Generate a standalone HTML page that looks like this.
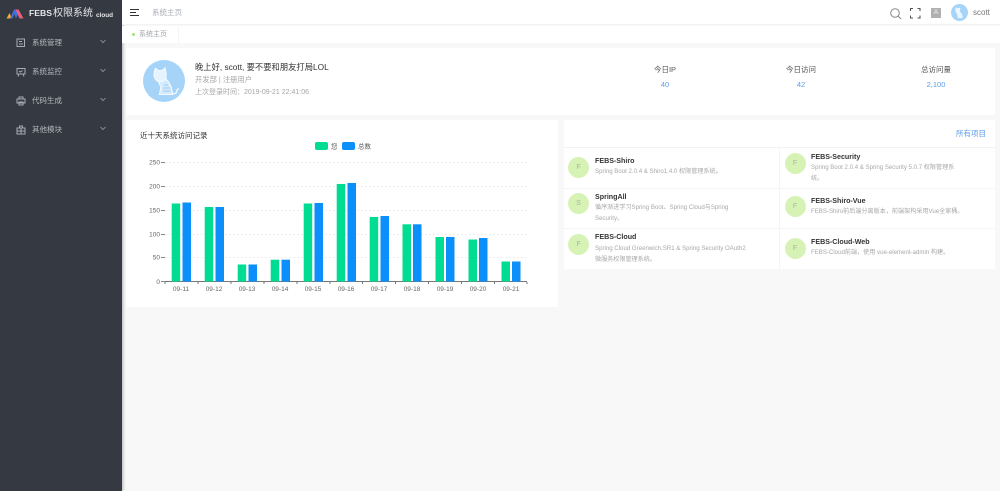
<!DOCTYPE html>
<html><head><meta charset="utf-8"><style>
*{margin:0;padding:0;box-sizing:border-box}
html,body{width:1000px;height:491px;overflow:hidden;background:#f8f8f8;font-family:"Liberation Sans","Noto Sans CJK SC",sans-serif}
#w{position:absolute;left:0;top:0;width:1000px;height:491px;filter:blur(.25px)}
.a{position:absolute;white-space:nowrap}
.card{position:absolute;background:#fff}
.nav{position:absolute;left:32px;font-size:7.5px;color:#b4b7bc;line-height:10px}
.av{position:absolute;width:21px;height:21px;border-radius:50%;background:#d6f3b5;color:#a8b596;font-size:7px;line-height:21px;text-align:center}
.t{position:absolute;font-size:7.1px;font-weight:bold;color:#333;line-height:10px;white-space:nowrap}
.d{position:absolute;font-size:6.1px;color:#a8a8a8;line-height:10.8px;width:155px}
.s{position:absolute;font-size:7.5px;color:#555;text-align:center;width:80px;line-height:10px}
.n{position:absolute;font-size:7.5px;color:#5b9be8;text-align:center;width:80px;line-height:10px}
</style></head><body><div id="w">
<div class="a" style="left:0;top:0;width:122px;height:491px;background:#353942;box-shadow:1px 0 3px rgba(0,0,0,.3)"></div>
<svg class="a" style="left:6px;top:9px" width="18" height="10" viewBox="0 0 18 10"><path d="M.5 9.500L3.500 4L6 9.500Z" fill="#f2ab2c"/><path d="M4 9.500L8 .5H10.500L12 5L10 9.500L8.200 5L6.500 9.500Z" fill="#3f6fe0"/><path d="M9.500 .5H12.500L17.500 9.500H13.500Z" fill="#ec5f7c"/></svg>
<div class="a" style="left:29px;top:7px;font-size:8.6px;font-weight:bold;color:#e6e7e9;line-height:13px">FEBS</div>
<div class="a" style="left:53px;top:7px;font-size:10px;color:#e6e7e9;line-height:13px">权限系统</div>
<div class="a" style="left:96px;top:8.500px;font-size:6.4px;font-weight:bold;color:#e6e7e9;line-height:13px">cloud</div>
<svg class="a" style="left:16px;top:38px" width="10" height="10" viewBox="0 0 10 10" fill="none" stroke="#a9acb2"><rect x="1" y="1" width="7.500" height="7.500"/><path d="M3 3.500H6M3 6H7"/></svg>
<div class="nav" style="top:38px">系统管理</div>
<svg class="a" style="left:16px;top:67px" width="10" height="10" viewBox="0 0 10 10" fill="none" stroke="#a9acb2"><path d="M1 1.500H9V7H1ZM3 7L2 9.500M7 7L8 9.500M3 4L4.500 5L6.500 3.500"/></svg>
<div class="nav" style="top:67px">系统监控</div>
<svg class="a" style="left:16px;top:96px" width="10" height="10" viewBox="0 0 10 10" fill="none" stroke="#a9acb2"><path d="M3 3V1H7V3M1 3H9V7H1ZM3 6H7V9H3Z"/></svg>
<div class="nav" style="top:96px">代码生成</div>
<svg class="a" style="left:16px;top:125px" width="10" height="10" viewBox="0 0 10 10" fill="none" stroke="#a9acb2"><path d="M1 3H9V9H1ZM3.500 3V1H6.500V3M1 6H9M5 3V9"/></svg>
<div class="nav" style="top:125px">其他模块</div>
<svg class="a" style="left:100px;top:39px" width="6" height="5" fill="none" stroke="#9a9da3" stroke-width=".8"><path d="M.5 1L3 3.500L5.500 1"/></svg>
<svg class="a" style="left:100px;top:68px" width="6" height="5" fill="none" stroke="#9a9da3" stroke-width=".8"><path d="M.5 1L3 3.500L5.500 1"/></svg>
<svg class="a" style="left:100px;top:97px" width="6" height="5" fill="none" stroke="#9a9da3" stroke-width=".8"><path d="M.5 1L3 3.500L5.500 1"/></svg>
<svg class="a" style="left:100px;top:126px" width="6" height="5" fill="none" stroke="#9a9da3" stroke-width=".8"><path d="M.5 1L3 3.500L5.500 1"/></svg>

<div class="card" style="left:122px;top:0;width:878px;height:25px;border-bottom:1px solid #f3f3f3"></div>
<svg class="a" style="left:130px;top:9px" width="10" height="8" stroke="#333"><path d="M0 .5H9M0 3.500H6M0 6.500H9"/></svg>
<div class="a" style="left:152px;top:8px;font-size:7.5px;color:#a9adb5;line-height:10px">系统主页</div>
<svg class="a" style="left:889px;top:7px" width="13" height="13" fill="none" stroke="#888"><circle cx="6" cy="6" r="4.300"/><path d="M9 9L12 12"/></svg>
<svg class="a" style="left:910px;top:8px" width="11" height="11" fill="none" stroke="#555" stroke-width="1.100"><path d="M.5 3V.5H3M7.500.5H10V3M10 7.500V10H7.500M3 10H.5V7.500"/></svg>
<div class="a" style="left:931px;top:8px;width:10px;height:10px;background:#b0b0b0;color:#e8e8e8;font-size:7px;line-height:10px;text-align:center">A</div>
<svg class="a" style="left:951px;top:4px" width="17" height="17" viewBox="0 0 42 42"><circle cx="21" cy="21" r="21" fill="#a6d4f9"/><path d="M11 10L13 8.500L15 10H20L22 8L23 13L22 19L27 24L29 33L27 35H17L15 24L11 19Z" fill="#eef6fd"/></svg>
<div class="a" style="left:973px;top:8px;font-size:8px;color:#777;line-height:10px">scott</div>

<div class="card" style="left:122px;top:26px;width:878px;height:17px"></div>
<div class="a" style="left:122px;top:26px;width:57px;height:17px;border-right:1px solid #f5f5f5"></div>
<div class="a" style="left:132px;top:33px;width:3px;height:3px;border-radius:50%;background:#a5e27c"></div>
<div class="a" style="left:139px;top:29.500px;font-size:7px;color:#a0a4aa;line-height:10px">系统主页</div>

<div class="card" style="left:126px;top:48px;width:869px;height:67px"></div>
<svg class="a" style="left:143px;top:60px" width="42" height="42" viewBox="0 0 42 42"><circle cx="21" cy="21" r="21" fill="#a6d4f9"/>
<path d="M15 21L18 27L16.500 34.500H29.500L29 31C28.500 26 26 22 23 19Z" fill="#d3e9fc" stroke="#f4faff" stroke-width="1.100"/>
<path d="M11.500 11L12.500 8.500L15.500 10.500H19L22 8L23 13L23 18C22 21 19 22 16 21.500C13 21 11 18 11 15Z" fill="#e6f3fe" stroke="#f4faff" stroke-width="1.100"/>
<path d="M29.500 33.500C32.500 34.500 34 32.500 34 30L36 28.500" fill="none" stroke="#f1f8fe" stroke-width="1.300"/>
<path d="M21 25H25M20 28H27M20 31H28" stroke="#8fc4f2" stroke-width=".7"/></svg>
<div class="a" style="left:195px;top:61px;font-size:8.300px;color:#333;line-height:12px">晚上好, scott, 要不要和朋友打局LOL</div>
<div class="a" style="left:195px;top:75px;font-size:7.300px;color:#a5a5a5;line-height:10px">开发部 | 注册用户</div>
<div class="a" style="left:195px;top:88px;font-size:7px;color:#a5a5a5;line-height:10px">上次登录时间：2019-09-21 22:41:06</div>
<div class="s" style="left:625px;top:64.500px">今日IP</div><div class="n" style="left:625px;top:80px">40</div>
<div class="s" style="left:761px;top:64.500px">今日访问</div><div class="n" style="left:761px;top:80px">42</div>
<div class="s" style="left:896px;top:64.500px">总访问量</div><div class="n" style="left:896px;top:80px">2,100</div>

<div class="card" style="left:126px;top:120px;width:432px;height:187px"></div>
<div class="a" style="left:140px;top:131px;font-size:7.500px;color:#333;line-height:10px">近十天系统访问记录</div>
<svg class="a" style="left:126px;top:120px;font-family:'Liberation Sans','Noto Sans CJK SC',sans-serif" width="432" height="187" viewBox="126 120 432 187">
<rect x="315" y="142" width="13" height="8" rx="2" fill="#00dc92"/>
<rect x="342" y="142" width="13" height="8" rx="2" fill="#0b8ffb"/>
<text x="331" y="148.500" font-size="6.500" fill="#555">您</text><text x="358" y="148.500" font-size="6.500" fill="#555">总数</text>
<path d="M165 162.500H527M165 186.500H527M165 210.500H527M165 234.500H527M165 257.500H527" stroke="#eee" stroke-dasharray="2 2"/>
<path d="M165 281.500H527" stroke="#777"/>
<path d="M161 162.500H165M161 186.500H165M161 210.500H165M161 234.500H165M161 257.500H165M161 281.500H165" stroke="#888"/>
<path d="M165 282V284M198 282V284M231 282V284M264 282V284M297 282V284M330 282V284M362.500 282V284M395.500 282V284M428.500 282V284M461.500 282V284M494.500 282V284M527 282V284" stroke="#777"/>
<g fill="#00dc92">
<rect x="171.700" y="203.500" width="8.500" height="78"/><rect x="204.700" y="207" width="8.500" height="74.500"/><rect x="237.700" y="264.500" width="8.500" height="17"/><rect x="270.700" y="259.700" width="8.500" height="21.800"/><rect x="303.700" y="203.500" width="8.500" height="78"/><rect x="336.700" y="184" width="8.500" height="97.500"/><rect x="369.700" y="217" width="8.500" height="64.500"/><rect x="402.500" y="224.300" width="8.500" height="57.200"/><rect x="435.500" y="237" width="8.500" height="44.500"/><rect x="468.500" y="239.500" width="8.500" height="42"/><rect x="501.500" y="261.500" width="8.500" height="20"/></g>
<g fill="#0b8ffb">
<rect x="182.500" y="202.500" width="8.500" height="79"/><rect x="215.500" y="207" width="8.500" height="74.500"/><rect x="248.500" y="264.500" width="8.500" height="17"/><rect x="281.500" y="259.700" width="8.500" height="21.800"/><rect x="314.500" y="203" width="8.500" height="78.500"/><rect x="347.500" y="183" width="8.500" height="98.500"/><rect x="380.500" y="216" width="8.500" height="65.500"/><rect x="413" y="224.300" width="8.500" height="57.200"/><rect x="446" y="237" width="8.500" height="44.500"/><rect x="479" y="238" width="8.500" height="43.500"/><rect x="512" y="261.500" width="8.500" height="20"/></g>
<g font-size="6.500" fill="#666" text-anchor="end"><text x="160" y="164.500">250</text><text x="160" y="188.500">200</text><text x="160" y="212.500">150</text><text x="160" y="236.500">100</text><text x="160" y="259.500">50</text><text x="160" y="284">0</text></g>
<g font-size="6.500" fill="#666" text-anchor="middle"><text x="181" y="291">09-11</text><text x="214" y="291">09-12</text><text x="247" y="291">09-13</text><text x="280" y="291">09-14</text><text x="313" y="291">09-15</text><text x="346" y="291">09-16</text><text x="379" y="291">09-17</text><text x="412" y="291">09-18</text><text x="445" y="291">09-19</text><text x="478" y="291">09-20</text><text x="511" y="291">09-21</text></g>
</svg>

<div class="card" style="left:564px;top:120px;width:431px;height:149px"></div>
<div class="a" style="left:956px;top:129px;font-size:7.500px;color:#5b9be8;line-height:10px">所有项目</div>
<div class="a" style="left:564px;top:147px;width:431px;height:1px;background:#f3f3f3"></div>
<div class="a" style="left:564px;top:188px;width:431px;height:1px;background:#f5f5f5"></div>
<div class="a" style="left:564px;top:228px;width:431px;height:1px;background:#f5f5f5"></div>
<div class="a" style="left:779px;top:148px;width:1px;height:121px;background:#f5f5f5"></div>

<div class="av" style="left:568px;top:157px">F</div>
<div class="t" style="left:595px;top:156px">FEBS-Shiro</div>
<div class="d" style="left:595px;top:167px">Spring Boot 2.0.4 &amp; Shiro1.4.0 权限管理系统。</div>
<div class="av" style="left:568px;top:193px">S</div>
<div class="t" style="left:595px;top:192px">SpringAll</div>
<div class="d" style="left:595px;top:203px">循序渐进学习Spring Boot、Spring Cloud与Spring Security。</div>
<div class="av" style="left:568px;top:234px">F</div>
<div class="t" style="left:595px;top:232px">FEBS-Cloud</div>
<div class="d" style="left:595px;top:244px">Spring Cloud Greenwich.SR1 &amp; Spring Security OAuth2 微服务权限管理系统。</div>
<div class="av" style="left:784.500px;top:153px">F</div>
<div class="t" style="left:811px;top:151.500px">FEBS-Security</div>
<div class="d" style="left:811px;top:163px;width:150px">Spring Boot 2.0.4 &amp; Spring Security 5.0.7 权限管理系统。</div>
<div class="av" style="left:784.500px;top:196px">F</div>
<div class="t" style="left:811px;top:196px">FEBS-Shiro-Vue</div>
<div class="d" style="left:811px;top:207px">FEBS-Shiro前后端分离版本，前端架构采用Vue全家桶。</div>
<div class="av" style="left:784.500px;top:237.500px">F</div>
<div class="t" style="left:811px;top:237px">FEBS-Cloud-Web</div>
<div class="d" style="left:811px;top:248px">FEBS-Cloud前端，使用 vue-element-admin 构建。</div>
</div></body></html>
